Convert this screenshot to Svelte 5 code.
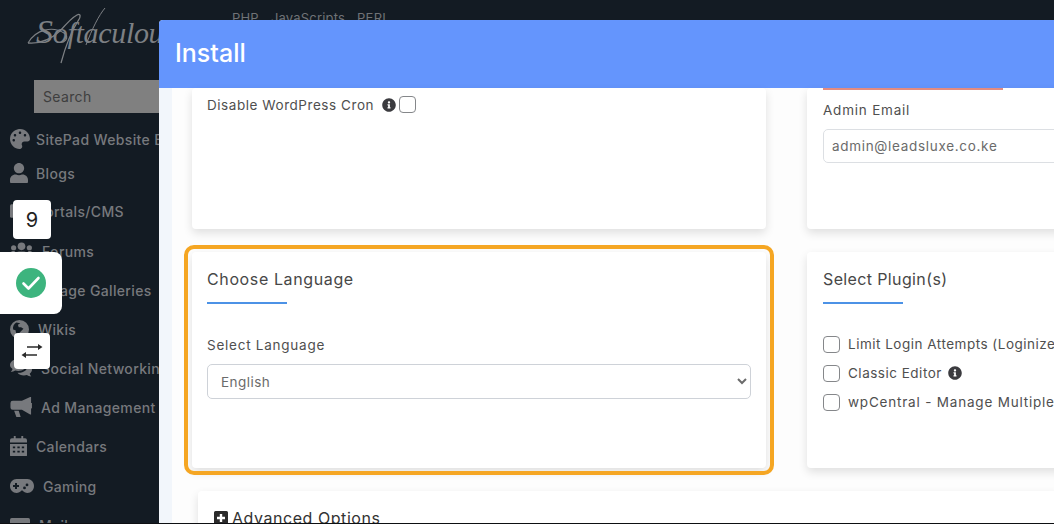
<script>
  const menu = [
    { key: 'palette', label: 'SitePad Website Builder', vb: '0 0 512 512', w: 20, gap: 6, mt: 0 },
    { key: 'user', label: 'Blogs', vb: '0 0 448 512', w: 18, gap: 8, mt: -4 },
    { key: 'folder', label: 'Portals/CMS', vb: '0 0 24 24', w: 18, gap: 8, mt: 0 },
    { key: 'users', label: 'Forums', vb: '0 0 24 18', w: 23, gap: 9, mt: 2 },
    { key: 'image', label: 'Image Galleries', vb: '0 0 24 20', w: 23, gap: 10, mt: 1 },
    { key: 'globe', label: 'Wikis', vb: '0 0 24 24', w: 19, gap: 9, mt: 1 },
    { key: 'comments', label: 'Social Networking', vb: '0 0 24 19', w: 22, gap: 9, mt: 1 },
    { key: 'bullhorn', label: 'Ad Management', vb: '0 0 24 22', w: 22, gap: 9, mt: 1 },
    { key: 'calendar', label: 'Calendars', vb: '0 0 18 22', w: 17, gap: 9, mt: 1 },
    { key: 'gamepad', label: 'Gaming', vb: '0 0 24 16', w: 24, gap: 9, mt: 2 },
    { key: 'mail', label: 'Mails', vb: '0 0 24 18', w: 20, gap: 9, mt: 1 }
  ];
  const plugins = [
    { label: 'Limit Login Attempts (Loginizer)' },
    { label: 'Classic Editor', info: true },
    { label: 'wpCentral - Manage Multiple WordPress' }
  ];
  const infoPath = 'M256 8C119 8 8 119 8 256s111 248 248 248 248-111 248-248S393 8 256 8zm0 110c23.196 0 42 18.804 42 42s-18.804 42-42 42-42-18.804-42-42 18.804-42 42-42zm56 254c0 6.627-5.373 12-12 12h-88c-6.627 0-12-5.373-12-12v-24c0-6.627 5.373-12 12-12h12v-64h-12c-6.627 0-12-5.373-12-12v-24c0-6.627 5.373-12 12-12h64c6.627 0 12 5.373 12 12v100h12c6.627 0 12 5.373 12 12v24z';
</script>

<div class="page">
  <aside class="sidebar">
    <div class="logo">
      <svg class="swash" viewBox="0 0 90 60" width="90" height="60" aria-hidden="true">
        <path d="M1 36C9 22 26 19 37 26C43 31 38 37 30 35" fill="none" stroke="currentColor" stroke-width="1.100"/>
        <path d="M1 36C12 37 24 32 33 24C40 16 46 10 50 8C54 6 54 10 51 14C44 25 38 41 34 56" fill="none" stroke="currentColor" stroke-width="1.300"/>
        <path d="M78 1C72 8 65 22 59 38" fill="none" stroke="currentColor" stroke-width="1"/>
      </svg>
      <span class="logo-text"><span class="cap">S</span>oftaculous</span>
    </div>
    <div class="search">Search</div>
    <nav class="menu">
      {#each menu as m}
        <div class="item" style="margin-top:{m.mt}px;gap:{m.gap}px">
          <svg viewBox={m.vb} style="width:{m.w}px" class="mi" aria-hidden="true">
            {#if m.key === 'palette'}
              <path d="M204.3 5C104.9 24.4 24.8 104.3 5.2 203.4c-37 187 131.7 326.4 258.8 306.7 41.2-6.4 61.4-54.6 42.5-91.7-23.1-45.4 9.9-98.4 60.9-98.4h79.7c35.8 0 64.8-29.6 64.9-65.3C511.5 97.1 368.1-26.9 204.3 5zM96 320c-17.7 0-32-14.3-32-32s14.3-32 32-32 32 14.3 32 32-14.3 32-32 32zm32-128c-17.7 0-32-14.3-32-32s14.3-32 32-32 32 14.3 32 32-14.3 32-32 32zm128-64c-17.7 0-32-14.3-32-32s14.3-32 32-32 32 14.3 32 32-14.3 32-32 32zm128 64c-17.7 0-32-14.3-32-32s14.3-32 32-32 32 14.3 32 32-14.3 32-32 32z"/>
            {:else if m.key === 'user'}
              <path d="M224 256c70.7 0 128-57.3 128-128S294.7 0 224 0 96 57.3 96 128s57.3 128 128 128zm89.6 32h-16.7c-22.2 10.2-46.9 16-72.9 16s-50.6-5.8-72.9-16h-16.7C60.2 288 0 348.2 0 422.4V464c0 26.5 21.5 48 48 48h352c26.5 0 48-21.5 48-48v-41.6c0-74.2-60.2-134.4-134.4-134.4z"/>
            {:else if m.key === 'folder'}
              <rect x="0" y="3" width="24" height="18" rx="2"/>
            {:else if m.key === 'users'}
              <circle cx="12" cy="4.500" r="4"/><circle cx="3.800" cy="6" r="2.700"/><circle cx="20.200" cy="6" r="2.700"/>
              <path d="M5 18v-3c0-3 2.500-5 4.500-5h5c2 0 4.500 2 4.500 5v3zM0 13c0-2 1.500-3.500 3-3.500h2.500C4 11 3.500 12.500 3.500 14H0zM24 13c0-2-1.500-3.500-3-3.500h-2.500c1.500 1.500 2 3 2 4.500H24z"/>
            {:else if m.key === 'image'}
              <path fill-rule="evenodd" d="M2 0h20a2 2 0 0 1 2 2v16a2 2 0 0 1-2 2H2a2 2 0 0 1-2-2V2a2 2 0 0 1 2-2zM3 16h18l-6-8-4 5-2-2z"/>
            {:else if m.key === 'globe'}
              <path fill-rule="evenodd" d="M12 0a12 12 0 1 0 0 24 12 12 0 0 0 0-24zM8 3C5 5 3 8 4 12l3 1 1 5 3 3 1-5 5-5-3-2-3 0-1-3 3-2z"/>
            {:else if m.key === 'comments'}
              <path d="M9 0c5 0 9 3 9 6.500S14 13 9 13c-1.200 0-2.300-.2-3.300-.5C4.500 13.500 2.500 14 .8 14c1-1 1.700-2 2-3.200C1.100 9.700 0 8.200 0 6.500 0 3 4 0 9 0z"/>
              <path d="M19.500 6.500c2.700 1 4.500 3 4.500 5.300 0 1.600-.9 3-2.500 4.200.2 1 .9 2 1.700 3-1.800 0-3.600-.6-4.800-1.500-1 .3-2 .5-3.200.5-3 0-5.600-1.200-7-3 6.500.5 11.500-3 10.800-8.500z"/>
            {:else if m.key === 'bullhorn'}
              <path d="M22 0h1v19h-1l-9-5H3a2.500 2.500 0 0 1-2.500-2.500v-5A2.500 2.500 0 0 1 3 4h10z"/>
              <path d="M4.500 15h5l2.200 7H7zM23 6.500a3 3 0 0 1 0 6z"/>
            {:else if m.key === 'calendar'}
              <path fill-rule="evenodd" d="M4 0h2v2.500h6V0h2v2.500h2a2 2 0 0 1 2 2V7H0V4.500a2 2 0 0 1 2-2h2zM0 8.500h18V20a2 2 0 0 1-2 2H2a2 2 0 0 1-2-2zM3 11v2h2.500v-2zM7.800 11v2h2.500v-2zM12.500 11v2H15v-2zM3 15.500v2h2.500v-2zM7.800 15.500v2h2.500v-2zM12.500 15.500v2H15v-2z"/>
            {:else if m.key === 'gamepad'}
              <path fill-rule="evenodd" d="M6.500 1h11C21 1 24 4.200 24 8s-3 7-6.500 7c-2 0-3.800-1-5-2.500h-1C10.300 14 8.500 15 6.500 15 3 15 0 11.800 0 8s3-7 6.500-7zM5 5v2H3v2h2v2h2V9h2V7H7V5zM17 5.500a1.400 1.400 0 1 0 0 2.800 1.400 1.400 0 0 0 0-2.800zM14.500 8.500a1.400 1.400 0 1 0 0 2.800 1.400 1.400 0 0 0 0-2.800z"/>
            {:else}
              <rect x="0" y="0" width="24" height="18" rx="2"/>
            {/if}
          </svg>
          <span>{m.label}</span>
        </div>
      {/each}
    </nav>
  </aside>

  <div class="topnav"><span>PHP</span><span>JavaScripts</span><span>PERL</span></div>

  <div class="badge nine">9</div>
  <div class="badge check">
    <svg viewBox="0 0 30 30" width="30" height="30" aria-hidden="true">
      <circle cx="15" cy="15" r="15" fill="#3db47e"/>
      <path d="M7.500 15.500l5 5 10-10.500" fill="none" stroke="#fff" stroke-width="2.600" stroke-linecap="round" stroke-linejoin="round"/>
    </svg>
  </div>
  <div class="badge swap">
    <svg viewBox="0 0 22 16" width="22" height="16" aria-hidden="true">
      <path d="M6 3.200h11V1l4.500 3-4.500 3V4.800H6zM16 11.200H5V9L.5 12 5 15v-2.200h11z" fill="#2b2b2b"/>
    </svg>
  </div>

  <section class="modal">
    <header class="modal-head">Install</header>
    <div class="modal-body">
      <div class="panel">
        <div class="grid">
          <div class="card short">
            <label class="row">
              <span>Disable WordPress Cron</span>
              <svg class="info first" viewBox="0 0 512 512" aria-hidden="true"><path d={infoPath}/></svg>
              <input class="cb" type="checkbox" />
            </label>
          </div>
          <div class="card short right">
            <div class="red-line"></div>
            <div class="field-label">Admin Email</div>
            <input class="text email" type="text" value="admin@leadsluxe.co.ke" />
          </div>

          <div class="card tall">
            <div class="highlight"></div>
            <h3>Choose Language</h3>
            <div class="rule"></div>
            <div class="field-label lang">Select Language</div>
            <select class="text sel"><option>English</option></select>
          </div>
          <div class="card tall right">
            <h3 class="plugin-title">Select Plugin(s)</h3>
            <div class="rule"></div>
            <div class="plugins">
              {#each plugins as p}
                <label class="plugin">
                  <input class="cb" type="checkbox" />
                  <span>{p.label}</span>
                  {#if p.info}
                    <svg class="info" viewBox="0 0 512 512" aria-hidden="true"><path d={infoPath}/></svg>
                  {/if}
                </label>
              {/each}
            </div>
          </div>
        </div>
        <div class="card advanced">
          <svg class="plus" viewBox="0 0 14 14" aria-hidden="true">
            <path fill-rule="evenodd" d="M1.500 0h11A1.500 1.500 0 0 1 14 1.500v11a1.500 1.500 0 0 1-1.500 1.500h-11A1.500 1.500 0 0 1 0 12.500v-11A1.500 1.500 0 0 1 1.500 0zM5.800 3v2.800H3v2.400h2.800V11h2.400V8.200H11V5.800H8.200V3z"/>
          </svg>
          <span>Advanced Options</span>
        </div>
      </div>
    </div>
  </section>
</div>

<style>
  :global(body) {
    margin: 0;
    background: #0d0f12;
  }
  .page {
    position: relative;
    width: 1054px;
    height: 523px;
    overflow: hidden;
    background: #131b23;
    font-family: Inter, "Liberation Sans", sans-serif;
    color: #4f4f4f;
  }
  .sidebar {
    width: 159px;
    color: #77797d;
    overflow: hidden;
  }
  .logo {
    position: relative;
    height: 80px;
    color: #7d8084;
  }
  .swash {
    position: absolute;
    left: 27px;
    top: 7px;
  }
  .logo-text {
    position: absolute;
    left: 36px;
    top: 13px;
    font: italic 30px "Liberation Serif", serif;
    letter-spacing: -0.3px;
    white-space: nowrap;
  }
  .cap {
    font-size: 34px;
  }
  .search {
    margin-left: 34px;
    height: 33px;
    line-height: 33px;
    padding-left: 9px;
    background: #808080;
    color: #3e3e3e;
    font-size: 14px;
    letter-spacing: 0.35px;
  }
  .menu {
    display: flex;
    flex-direction: column;
    margin-top: 7px;
    padding-left: 10px;
  }
  .item {
    display: flex;
    align-items: center;
    flex: none;
    height: 38px;
    font-size: 14px;
    font-weight: 500;
    white-space: nowrap;
    letter-spacing: 0.35px;
  }
  .mi {
    flex: none;
    fill: currentColor;
  }
  .topnav {
    position: absolute;
    left: 232px;
    top: 10px;
    display: flex;
    gap: 12px;
    color: #6f7276;
    font-size: 13px;
    letter-spacing: 0.2px;
  }
  .badge {
    position: absolute;
    display: flex;
    align-items: center;
    justify-content: center;
    background: #fff;
    z-index: 3;
  }
  .nine {
    left: 13px;
    top: 200px;
    width: 38px;
    height: 39px;
    border-radius: 4px;
    font-size: 20px;
    color: #222;
  }
  .check {
    left: 0;
    top: 252px;
    width: 62px;
    height: 62px;
    border-radius: 0 8px 8px 0;
  }
  .swap {
    left: 14px;
    top: 333px;
    width: 36px;
    height: 36px;
    border-radius: 4px;
  }
  .modal {
    position: absolute;
    left: 159px;
    top: 20px;
    width: 1000px;
    height: 503px;
    display: flex;
    flex-direction: column;
    overflow: hidden;
    border-radius: 4px 4px 0 0;
    background: #f2f6fb;
  }
  .modal-head {
    flex: none;
    height: 68px;
    line-height: 66px;
    padding-left: 16px;
    background: #6495fd;
    color: #fff;
    font-size: 25px;
    font-weight: 500;
  }
  .modal-body {
    flex: 1;
    padding-left: 13px;
    min-height: 0;
  }
  .panel {
    height: 100%;
    padding-left: 20px;
    background: #fdfdfd;
  }
  .grid {
    display: grid;
    grid-template-columns: 574px 320px;
    grid-template-rows: 141px 216px;
    column-gap: 41px;
    row-gap: 23px;
  }
  .card {
    position: relative;
    box-sizing: border-box;
    padding: 0 15px;
    background: #fff;
    border-radius: 4px;
    box-shadow: 0 4px 10px rgba(0, 0, 0, 0.12);
  }
  .right {
    padding-left: 16px;
  }
  .short .row {
    display: flex;
    align-items: center;
    padding-top: 8px;
    font-size: 13.500px;
    letter-spacing: 0.55px;
  }
  .info {
    width: 14px;
    height: 14px;
    fill: #3b3b3f;
    flex: none;
  }
  .info.first {
    margin-left: 8px;
    margin-right: 3px;
  }
  .cb {
    appearance: none;
    flex: none;
    box-sizing: border-box;
    width: 17px;
    height: 17px;
    margin: 0;
    background: #fff;
    border: 1px solid #85878a;
    border-radius: 4px;
  }
  .red-line {
    width: 180px;
    height: 2px;
    background: #e38b80;
  }
  .field-label {
    margin-top: 11px;
    font-size: 13.500px;
    letter-spacing: 0.78px;
    line-height: 18px;
  }
  .text {
    display: block;
    box-sizing: border-box;
    width: 100%;
    height: 35px;
    margin-top: 10px;
    padding: 0 8px;
    background: #fff;
    border: 1px solid #dcdfe3;
    border-radius: 5px;
    color: #6b6b6b;
    font-family: inherit;
    font-size: 13.500px;
    letter-spacing: 0.69px;
  }
  .email {
    height: 34px;
  }
  .sel {
    padding: 0 4px 0 9px;
    border-color: #ced2d8;
    margin-top: 10px;
    letter-spacing: 0.45px;
  }
  h3 {
    margin: 0;
    padding-top: 17px;
    font-size: 16px;
    font-weight: 400;
    line-height: 20px;
    letter-spacing: 0.62px;
    color: #474747;
  }
  .plugin-title {
    letter-spacing: 0.37px;
  }
  .rule {
    width: 80px;
    height: 2px;
    margin-top: 13px;
    background: #4c92e6;
  }
  .lang {
    margin-top: 32px;
    letter-spacing: 0.75px;
  }
  .plugins {
    display: flex;
    flex-direction: column;
    gap: 11px;
    margin-top: 31px;
  }
  .plugin {
    display: flex;
    align-items: center;
    gap: 8px;
    height: 18px;
    font-size: 13.500px;
    letter-spacing: 0.5px;
    white-space: nowrap;
  }
  .plugin:nth-child(3) {
    letter-spacing: 0.8px;
  }
  .plugin .info {
    margin-left: -2px;
  }
  .highlight {
    position: absolute;
    inset: -7px -8px -7px -8px;
    border: 4px solid #f5a623;
    border-radius: 10px;
    pointer-events: none;
  }
  .advanced {
    display: flex;
    align-items: flex-start;
    gap: 4px;
    margin: 23px 0 0 6px;
    width: 860px;
    height: 60px;
    padding: 0 16px;
    font-size: 16px;
    letter-spacing: 0.55px;
    color: #333;
  }
  .advanced span {
    padding-top: 17px;
    line-height: 20px;
  }
  .plus {
    width: 14px;
    height: 14px;
    flex: none;
    margin-top: 20px;
    fill: #2b2b2b;
  }
</style>
